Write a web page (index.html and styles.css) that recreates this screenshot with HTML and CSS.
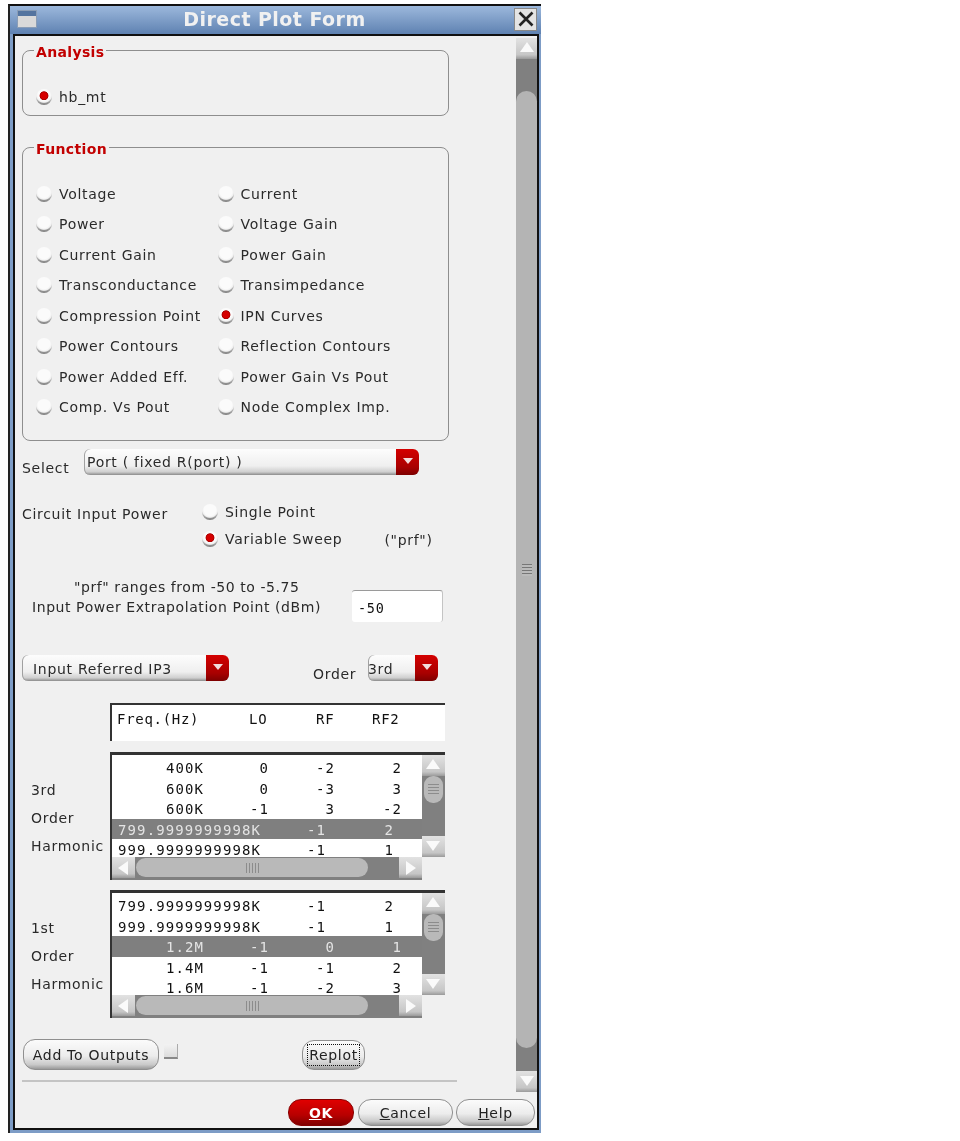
FILE: index.html
```html
<!DOCTYPE html>
<html lang="en">
<head>
<meta charset="utf-8">
<title>Direct Plot Form</title>
<link rel="stylesheet" href="styles.css">
</head>
<body>
<div class="window">
  <header class="titlebar">
    <span class="win-menu"><span class="win-menu-top"></span></span>
    <h1 class="win-title">Direct Plot Form</h1>
    <span class="win-close"><svg width="20" height="20" viewBox="0 0 20 20"><path d="M3.5 3.5L16.5 16.5M16.5 3.5L3.5 16.5" stroke="#222" stroke-width="2.6" fill="none"/></svg></span>
  </header>
  <div class="client">
    <div class="upper">
      <main class="form">
        <fieldset class="group group-analysis">
          <legend>Analysis</legend>
          <div class="opt"><span class="radio on"></span><span>hb_mt</span></div>
        </fieldset>
        <fieldset class="group group-function">
          <legend>Function</legend>
          <div class="fn-grid">
            <div class="opt"><span class="radio"></span><span>Voltage</span></div>
            <div class="opt"><span class="radio"></span><span>Current</span></div>
            <div class="opt"><span class="radio"></span><span>Power</span></div>
            <div class="opt"><span class="radio"></span><span>Voltage Gain</span></div>
            <div class="opt"><span class="radio"></span><span>Current Gain</span></div>
            <div class="opt"><span class="radio"></span><span>Power Gain</span></div>
            <div class="opt"><span class="radio"></span><span>Transconductance</span></div>
            <div class="opt"><span class="radio"></span><span>Transimpedance</span></div>
            <div class="opt"><span class="radio"></span><span>Compression Point</span></div>
            <div class="opt"><span class="radio on"></span><span>IPN Curves</span></div>
            <div class="opt"><span class="radio"></span><span>Power Contours</span></div>
            <div class="opt"><span class="radio"></span><span>Reflection Contours</span></div>
            <div class="opt"><span class="radio"></span><span>Power Added Eff.</span></div>
            <div class="opt"><span class="radio"></span><span>Power Gain Vs Pout</span></div>
            <div class="opt"><span class="radio"></span><span>Comp. Vs Pout</span></div>
            <div class="opt"><span class="radio"></span><span>Node Complex Imp.</span></div>
          </div>
        </fieldset>
        <div class="select-row">
          <span class="select-label">Select</span>
          <div class="combo combo-port"><span class="combo-text">Port ( fixed R(port) )</span><span class="combo-arrow"></span></div>
        </div>
        <div class="power-row">
          <span class="power-label">Circuit Input Power</span>
          <div class="power-opts">
            <div class="opt"><span class="radio"></span><span>Single Point</span></div>
            <div class="opt"><span class="radio on"></span><span>Variable Sweep</span></div>
          </div>
          <span class="prf">("prf")</span>
        </div>
        <div class="extrap-row">
          <div class="extrap-text">
            <div class="extrap-range">"prf" ranges from -50 to -5.75</div>
            <div class="extrap-point">Input Power Extrapolation Point (dBm)</div>
          </div>
          <div class="input">-50</div>
        </div>
        <div class="ip-row">
          <div class="combo combo-ip"><span class="combo-text">Input Referred IP3</span><span class="combo-arrow"></span></div>
          <span class="order-label">Order</span>
          <div class="combo combo-order"><span class="combo-text">3rd</span><span class="combo-arrow"></span></div>
        </div>
        <div class="table-head mono">
          <span class="th-freq">Freq.(Hz)</span><span class="th-lo">LO</span><span class="th-rf">RF</span><span class="th-rf2">RF2</span>
        </div>
        <div class="harm harm-3">
          <div class="harm-label"><div>3rd</div><div>Order</div><div>Harmonic</div></div>
          <div class="listbox">
            <div class="list-main">
              <div class="rows mono">
                <div class="row short"><span>400K</span><span>0</span><span>-2</span><span>2</span></div>
                <div class="row short"><span>600K</span><span>0</span><span>-3</span><span>3</span></div>
                <div class="row short"><span>600K</span><span>-1</span><span>3</span><span>-2</span></div>
                <div class="row long sel"><span>799.9999999998K</span><span>-1</span><span>2</span></div>
                <div class="row long"><span>999.9999999998K</span><span>-1</span><span>1</span></div>
              </div>
              <div class="vbar">
                <span class="arrow-btn up"></span>
                <div class="vtrough"><span class="vthumb"></span></div>
                <span class="arrow-btn down"></span>
              </div>
            </div>
            <div class="hbar">
              <span class="arrow-btn left"></span>
              <div class="htrough"><span class="hthumb"></span></div>
              <span class="arrow-btn right"></span>
            </div>
          </div>
        </div>
        <div class="harm harm-1">
          <div class="harm-label"><div>1st</div><div>Order</div><div>Harmonic</div></div>
          <div class="listbox">
            <div class="list-main">
              <div class="rows mono">
                <div class="row long"><span>799.9999999998K</span><span>-1</span><span>2</span></div>
                <div class="row long"><span>999.9999999998K</span><span>-1</span><span>1</span></div>
                <div class="row short sel"><span>1.2M</span><span>-1</span><span>0</span><span>1</span></div>
                <div class="row short"><span>1.4M</span><span>-1</span><span>-1</span><span>2</span></div>
                <div class="row short"><span>1.6M</span><span>-1</span><span>-2</span><span>3</span></div>
              </div>
              <div class="vbar">
                <span class="arrow-btn up"></span>
                <div class="vtrough"><span class="vthumb"></span></div>
                <span class="arrow-btn down"></span>
              </div>
            </div>
            <div class="hbar">
              <span class="arrow-btn left"></span>
              <div class="htrough"><span class="hthumb"></span></div>
              <span class="arrow-btn right"></span>
            </div>
          </div>
        </div>
        <div class="add-row">
          <button class="btn btn-add">Add To Outputs</button>
          <span class="check"></span>
          <button class="btn btn-replot"><span class="focus">Replot</span></button>
        </div>
        <div class="sep"></div>
      </main>
      <div class="vscroll">
        <span class="arrow-btn up big"></span>
        <div class="vs-trough"><div class="vs-thumb"><span class="grip"></span></div></div>
        <span class="arrow-btn down big"></span>
      </div>
    </div>
    <footer class="actions">
      <button class="btn btn-ok"><u>O</u>K</button>
      <button class="btn btn-cancel"><u>C</u>ancel</button>
      <button class="btn btn-help"><u>H</u>elp</button>
    </footer>
  </div>
</div>
</body>
</html>
```

FILE: styles.css
```css
* { box-sizing: border-box; }
html, body { margin: 0; padding: 0; background: #fff; }
body {
  width: 960px;
  height: 1141px;
  overflow: hidden;
  font-family: "DejaVu Sans", sans-serif;
  font-size: 14px;
  letter-spacing: 0.7px;
  color: #2a2a2a;
  padding: 4px 0 0 8px;
}
.mono { font-family: "DejaVu Sans Mono", monospace; font-size: 14px; letter-spacing: 1.1px; color: #111; }

.window {
  width: 533px;
  height: 1129px;
  border-top: 2px solid #111;
  border-left: 2px solid #222;
  background: #7d9cc6;
  display: flex;
  flex-direction: column;
  padding-right: 2px;
  padding-bottom: 3px;
  filter: blur(0.35px);
}
.titlebar {
  height: 28px;
  flex: none;
  margin-right: -2px;
  background: linear-gradient(#9cb8dc, #5f82b2);
  display: flex;
  align-items: center;
  padding: 0 4px 2px 7px;
}
.win-menu {
  width: 20px; height: 18px;
  background: #d9d9d9;
  border: 1px solid #8a9db6;
  display: block;
}
.win-menu-top { display: block; height: 5px; background: #54749f; }
.win-title {
  flex: 1;
  margin: 0 0 1px;
  font-size: 19px;
  font-weight: bold;
  letter-spacing: 0.45px;
  color: #f1f1f1;
  text-align: center;
  padding-right: 2px;
}
.win-close {
  width: 23px; height: 23px;
  background: #e4e4e4;
  border: 1px solid #888;
  display: flex; align-items: center; justify-content: center;
}
.client {
  flex: 1;
  margin-left: 3px;
  border: 2px solid #111;
  background: #f0f0f0;
  display: flex;
  flex-direction: column;
  min-height: 0;
}
.upper { display: flex; height: 1056px; flex: none; padding-top: 2px; }
.form { flex: 1; padding-left: 7px; min-width: 0; }

/* groups */
.group {
  width: 427px;
  margin: 0;
  border: 1px solid #8e8e8e;
  border-radius: 8px;
  display: block;
  min-width: 0;
}
.group legend {
  margin-left: -2px;
  padding: 4px 2px 0;
  font-size: 14px;
  font-weight: bold;
  letter-spacing: 0.35px;
  color: #c20000;
  line-height: 16px;
}
.group-analysis { height: 76px; margin-top: 2px; padding: 27px 0 0 13px; }
.group-function { height: 304px; margin-top: 21px; padding: 27px 0 0 13px; }
.fn-grid {
  display: grid;
  grid-template-columns: 181.5px 1fr;
  grid-auto-rows: 30.43px;
}
.opt { display: flex; align-items: center; gap: 7px; height: 20px; white-space: nowrap; }
.radio {
  width: 16px; height: 16px; flex: none;
  border-radius: 50%;
  background:
    radial-gradient(circle at 50% 36%, #fbfbfb 0 46%, #f0f0f0 58%, transparent 66%),
    linear-gradient(#efefef 35%, #7f7f7f);
}
.radio.on {
  background:
    radial-gradient(circle at 50% 42%, #d60000 0 25%, #a80000 33%, transparent 39%),
    radial-gradient(circle at 50% 36%, #fbfbfb 0 46%, #f0f0f0 58%, transparent 66%),
    linear-gradient(#efefef 35%, #7f7f7f);
}

/* combos */
.combo {
  display: flex;
  align-items: stretch;
  height: 26px;
  border-radius: 6px;
  background: linear-gradient(#fdfdfd, #efefef 65%, #cfcfcf 88%, #8b8b8b);
  box-shadow: inset 1px 0 #a0a0a0;
  overflow: hidden;
}
.combo-text { flex: 1; line-height: 27px; white-space: nowrap; }
.combo-arrow {
  flex: none;
  width: 23px;
  background: linear-gradient(#d40000, #a80000 70%, #7d0000);
  position: relative;
}
.combo-arrow::after {
  content: "";
  position: absolute;
  left: 7px; top: 9px;
  border: 5px solid transparent;
  border-top: 6px solid #f2dcdc;
  border-bottom: 0;
}
.select-row { display: flex; align-items: flex-start; margin-top: 8px; }
.select-label { width: 62px; padding-top: 11px; }
.combo-port { width: 335px; }
.combo-port .combo-text { padding-left: 3px; }

.power-row { display: flex; margin-top: 26px; height: 62px; }
.power-label { width: 180px; padding-top: 4px; }
.power-opts { display: flex; flex-direction: column; gap: 7px; }
.prf { margin-left: 42px; padding-top: 30px; }

.extrap-row { display: flex; margin-top: 13px; }
.extrap-text { width: 330px; line-height: 20px; letter-spacing: 0.57px; white-space: nowrap; }
.extrap-range { padding-left: 52px; }
.extrap-point { padding-left: 10px; }
.input {
  width: 91px; height: 32px;
  background: #fff;
  border-top: 1px solid #9a9a9a;
  border-right: 1px solid #c4c4c4;
  border-radius: 3px;
  font-family: "DejaVu Sans Mono", monospace;
  font-size: 13.5px;
  line-height: 34px;
  padding-left: 6px;
  color: #111;
  margin-top: 13px;
}
.ip-row { display: flex; align-items: flex-start; margin-top: 33px; }
.combo-ip { width: 207px; }
.combo-ip .combo-text { padding-left: 11px; }
.order-label { margin-left: 84px; padding-top: 11px; width: 55px; }
.combo-order { width: 70px; }
.combo-ip .combo-text, .combo-order .combo-text { line-height: 28px; }

/* tables */
.table-head {
  margin: 21px 0 0 88px;
  width: 335px;
  height: 38px;
  background: #fff;
  border-top: 2px solid #333;
  border-left: 2px solid #333;
  display: flex;
  align-items: flex-start;
  line-height: 22px;
  padding-top: 3px;
  letter-spacing: 0.7px;
}
.th-freq { margin-left: 5px; width: 132px; }
.th-lo { width: 67px; }
.th-rf { width: 56px; }
.harm { display: flex; }
.harm-3 { margin-top: 11px; }
.harm-1 { margin-top: 10px; }
.harm-label { width: 88px; padding: 24px 0 0 9px; line-height: 28px; white-space: nowrap; }
.listbox {
  width: 335px;
  height: 128px;
  border-top: 3px solid #333;
  border-left: 2px solid #333;
  display: flex;
  flex-direction: column;
  flex: none;
  background: #f0f0f0;
}
.list-main { display: flex; height: 102px; }
.rows { width: 310px; height: 102px; background: #fff; flex: none; padding-top: 2px; position: relative; }
.row {
  display: grid;
  height: 20.5px;
  line-height: 23px;
  padding-left: 5px;
  justify-items: end;
  white-space: nowrap;
}
.row.short { grid-template-columns: 87px 65px 66px 67px; }
.row.long { grid-template-columns: 144px 65px 68px; }
.row.sel { background: #7f7f7f; color: #e4e4e4; width: 333px; }
.vbar { width: 23px; flex: none; display: flex; flex-direction: column; position: relative; }
.vtrough { flex: 1; background: #808080; }
.vthumb {
  display: flex;
  align-items: center;
  justify-content: center;
  width: 19px; height: 27px; margin-left: 2px;
  border-radius: 9px;
  background: #b9b9b9;
}
.vthumb::after { content: ""; width: 11px; height: 11px; background: repeating-linear-gradient(#8c8c8c 0 1px, transparent 1px 3px); }
.hbar { display: flex; height: 23px; width: 310px; background: #808080; }
.htrough { flex: 1; }
.hthumb {
  display: flex;
  align-items: center;
  justify-content: center;
  width: 232px; height: 19px; margin: 1px 0 0 1px;
  border-radius: 10px;
  background: #b9b9b9;
}
.hthumb::after { content: ""; width: 13px; height: 10px; background: repeating-linear-gradient(90deg, #8c8c8c 0 1px, transparent 1px 3px); }

/* arrow buttons */
.arrow-btn {
  display: block;
  flex: none;
  width: 23px; height: 21px;
  background: linear-gradient(#e2e2e2, #c6c6c6 80%, #9a9a9a);
  position: relative;
}
.arrow-btn::after {
  content: "";
  position: absolute;
  border: 7px solid transparent;
}
.arrow-btn.up::after { left: 4px; top: 4px; border-bottom: 10px solid #fafafa; border-top: 0; }
.arrow-btn.down::after { left: 4px; top: 5px; border-top: 10px solid #fafafa; border-bottom: 0; }
.arrow-btn.left::after { left: 6px; top: 4px; border-right: 10px solid #fafafa; border-left: 0; }
.arrow-btn.right::after { left: 7px; top: 4px; border-left: 10px solid #fafafa; border-right: 0; }

/* buttons */
.btn {
  font: inherit;
  letter-spacing: inherit;
  color: #222;
  border: 1px solid #8f8f8f;
  border-radius: 12px;
  background: linear-gradient(#fbfbfb, #ececec 55%, #c9c9c9 85%, #9a9a9a);
  padding: 0;
}
.add-row { display: flex; align-items: flex-start; margin-top: 21px; margin-left: 1px; }
.btn-add { width: 136px; height: 31px; }
.check {
  width: 14px; height: 15px; margin: 5px 0 0 5px;
  background: linear-gradient(#f2f2f2, #dcdcdc);
  border-bottom: 2px solid #888;
  border-right: 1px solid #aaa;
}
.btn-replot { width: 63px; height: 30px; margin: 1px 0 0 124px; }
.focus { display: inline-block; padding: 2px 1px; outline: 1px dotted #111; }
.sep { width: 435px; height: 2px; background: #c4c4c4; margin-top: 10px; }

/* scrollbar */
.vscroll { width: 21px; flex: none; display: flex; flex-direction: column; }
.vs-trough { flex: 1; background: #808080; padding-top: 32px; padding-bottom: 23px; }
.vs-thumb {
  height: 100%;
  border-radius: 11px;
  background: #b4b4b4;
  display: flex;
  align-items: center;
  justify-content: center;
}
.grip { width: 10px; height: 12px; background: repeating-linear-gradient(#777 0 1px, #bbb 1px 3px); }
.arrow-btn.big { width: 21px; }

.actions {
  flex: 1;
  display: flex;
  justify-content: flex-end;
  align-items: flex-start;
  gap: 3px;
  padding: 7px 2px 0 0;
}
.actions .btn { height: 27px; border-radius: 13px; }
.btn-ok { width: 66px; margin-right: 1px; background: linear-gradient(#e00000, #b80000 60%, #800000); border-color: #800; color: #fff; font-weight: bold; }
.btn-cancel { width: 95px; }
.btn-help { width: 79px; }
```
